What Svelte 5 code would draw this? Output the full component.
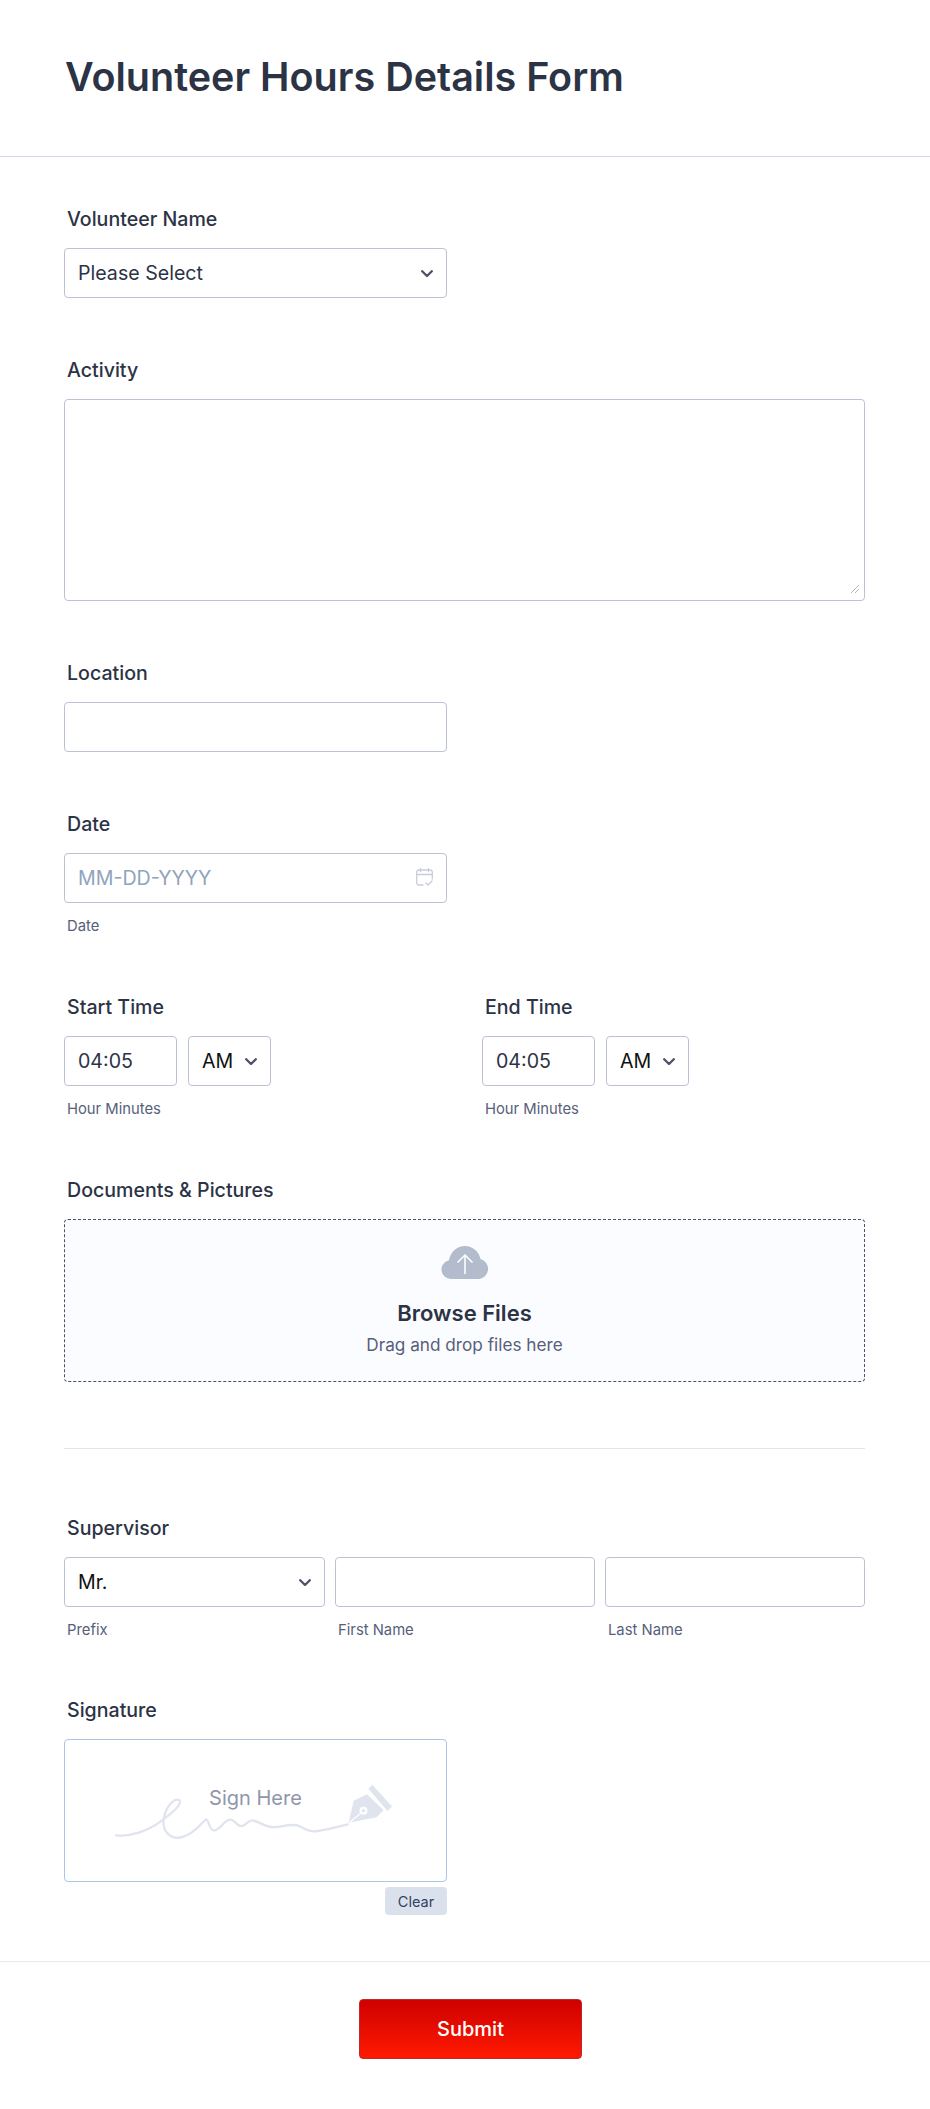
<script lang="ts">
  const suffixes = ['Prefix', 'First Name', 'Last Name'];

  const chevron = 'M1.2 1.2 6 6 10.800 1.2';
</script>

{#snippet caret()}
  <svg class="caret" width="12" height="7" viewBox="0 0 12 7" aria-hidden="true">
    <path d={chevron} fill="none" stroke="#4f5168" stroke-width="2.300" stroke-linecap="round" stroke-linejoin="round" />
  </svg>
{/snippet}

{#snippet timeField(label: string)}
  <div class="field">
    <label class="label" for={label}>{label}</label>
    <div class="time-row">
      <input id={label} class="input time" type="text" value="04:05" />
      <div class="select ampm">
        <span>AM</span>
        {@render caret()}
      </div>
    </div>
    <div class="sub">Hour Minutes</div>
  </div>
{/snippet}

<main class="form">
  <header class="head">
    <h1>Volunteer Hours Details Form</h1>
  </header>

  <section class="body">
    <div class="field">
      <div class="label">Volunteer Name</div>
      <div class="select half">
        <span class="value">Please Select</span>
        {@render caret()}
      </div>
    </div>

    <div class="field">
      <label class="label" for="activity">Activity</label>
      <div class="area-wrap">
        <textarea id="activity" class="input area"></textarea>
        <svg class="grip" width="10" height="10" viewBox="0 0 10 10" aria-hidden="true">
          <path d="M1 9 9 1M5 9 9 5" stroke="#b4b8c4" stroke-width="1" fill="none" />
        </svg>
      </div>
    </div>

    <div class="field">
      <label class="label" for="location">Location</label>
      <input id="location" class="input half" type="text" />
    </div>

    <div class="field">
      <label class="label" for="date">Date</label>
      <div class="date half">
        <input id="date" class="input" type="text" placeholder="MM-DD-YYYY" />
        <svg class="cal" width="17" height="18" viewBox="0 0 17 18" aria-hidden="true">
          <path d="M7 17H2.500A2 2 0 0 1 .7 15V4A2 2 0 0 1 2.500 2h12a2 2 0 0 1 1.800 2v7M.7 6.500h15.600M4.500.7v3M12.500.7v3M10 15l2 2 4-4" fill="none" stroke="#c8cdd9" stroke-width="1.300" stroke-linecap="round" stroke-linejoin="round" />
        </svg>
      </div>
      <div class="sub">Date</div>
    </div>

    <div class="times">
      {@render timeField('Start Time')}
      {@render timeField('End Time')}
    </div>

    <div class="field">
      <div class="label">Documents &amp; Pictures</div>
      <div class="upload">
        <svg width="48" height="33" viewBox="0 0 48 33" aria-hidden="true">
          <path d="M10 33a9.500 9.500 0 0 1-2-18.800C9.500 6 16 0 24 0c7.500 0 14 5.500 15.500 13A10.200 10.200 0 0 1 38 33Z" fill="#b3bccd" />
          <path d="M24 28V9M16.500 16.500 24 9l7.500 7.500" fill="none" stroke="#fff" stroke-width="1.500" />
        </svg>
        <div class="browse">Browse Files</div>
        <div class="drag">Drag and drop files here</div>
      </div>
    </div>

    <hr class="divider" />

    <div class="field name-field">
      <div class="label">Supervisor</div>
      <div class="name-row">
        <div class="name-col">
          <div class="select prefix">
            <span>Mr.</span>
            {@render caret()}
          </div>
          <div class="sub">{suffixes[0]}</div>
        </div>
        <div class="name-col">
          <input class="input" type="text" aria-label="First Name" />
          <div class="sub">{suffixes[1]}</div>
        </div>
        <div class="name-col">
          <input class="input" type="text" aria-label="Last Name" />
          <div class="sub">{suffixes[2]}</div>
        </div>
      </div>
    </div>

    <div class="field sig-field">
      <div class="label">Signature</div>
      <div class="sig half">
        <svg class="sig-art" viewBox="42 30 1149 429" aria-hidden="true">
          <path d="M192 320C240 325 290 305 325 280C360 255 395 225 385 213C370 205 345 230 337 270C332 310 360 335 395 325C430 315 455 280 465 272C475 270 475 305 490 305C510 305 520 272 540 272C555 272 560 295 575 292C590 288 595 272 610 275C630 280 650 297 675 295C700 293 720 285 745 290C765 298 775 310 800 308C830 304 865 295 897 287" fill="none" stroke="#e0e4ee" stroke-width="7" stroke-linecap="round" />
          <path d="M900 282 915 215 955 195 1006 243 985 265Z" fill="#e0e4ee" />
          <path d="M960 178 972 166 1032 232 1018 246Z" fill="#e0e4ee" />
          <circle cx="945" cy="245" r="12" fill="#fff" />
          <circle cx="945" cy="245" r="5" fill="#e0e4ee" />
          <path d="M903 280 938 252" stroke="#fff" stroke-width="4" />
        </svg>
        <span class="sign">Sign Here</span>
      </div>
      <div class="sig-actions half">
        <button class="clear" type="button">Clear</button>
      </div>
    </div>
  </section>

  <footer class="foot">
    <button class="submit" type="button">Submit</button>
  </footer>
</main>

<style>
  :global(body) {
    margin: 0;
    background: #fff;
  }

  .form {
    width: 930px;
    height: 2109px;
    font-family: Inter, 'Liberation Sans', sans-serif;
    color: #2c3345;
  }

  .head {
    height: 157px;
    padding: 53px 65px 0;
    box-sizing: border-box;
    border-bottom: 1px solid #d8dae9;
  }

  h1 {
    margin: 0;
    font-size: 39.5px;
    line-height: 48px;
    font-weight: 600;
  }

  .body {
    padding: 50px 65px 0 64px;
    height: 1805px;
    box-sizing: border-box;
    border-bottom: 1px solid #eaebf2;
  }

  .field {
    margin-bottom: 60px;
  }

  .label {
    display: block;
    height: 24px;
    line-height: 24px;
    margin: 0 0 17px 3px;
    font-size: 19.6px;
    font-weight: 500;
  }

  .input,
  .select {
    box-sizing: border-box;
    display: block;
    width: 100%;
    height: 50px;
    padding: 0 13px;
    background: #fff;
    border: 1px solid #bcc2d3;
    border-radius: 4px;
    font-family: inherit;
    font-size: 19.6px;
    color: #2c3345;
    outline: none;
  }

  .input::placeholder {
    color: #8fa3bd;
    opacity: 1;
  }

  .select {
    display: flex;
    align-items: center;
    justify-content: space-between;
  }

  .half {
    width: 383px;
  }

  .area-wrap {
    position: relative;
  }

  .area {
    height: 202px;
    padding-top: 10px;
    resize: none;
  }

  .grip {
    position: absolute;
    right: 5px;
    bottom: 7px;
  }

  .date {
    position: relative;
  }

  .cal {
    position: absolute;
    right: 14px;
    top: 15px;
  }

  .sub {
    height: 18px;
    line-height: 18px;
    margin: 14px 0 1px 3px;
    font-size: 14.800px;
    color: #57607a;
  }

  .times {
    display: grid;
    grid-template-columns: 418px 383px;
    margin-bottom: -1px;
  }

  .time-row {
    display: flex;
    gap: 11px;
  }

  .time {
    width: 113px;
  }

  .ampm {
    width: 83px;
    color: #111;
  }

  .upload {
    box-sizing: border-box;
    height: 163px;
    padding-top: 26px;
    display: flex;
    flex-direction: column;
    align-items: center;
    background: #fbfcff;
    border: 1px dashed #4d5068;
    border-radius: 4px;
  }

  .browse {
    margin-top: 19px;
    font-size: 22px;
    line-height: 30px;
    font-weight: 600;
  }

  .drag {
    margin-top: 4px;
    font-size: 17.200px;
    line-height: 26px;
    color: #57607a;
  }

  .divider {
    margin: 66px 0 67px;
    height: 1px;
    border: 0;
    background: #e3e5ec;
  }

  .name-field {
    margin-bottom: 58px;
  }

  .name-row {
    display: grid;
    grid-template-columns: 261px 260px 260px;
    gap: 10px;
  }

  .prefix {
    color: #111;
  }

  .sig-field {
    margin-bottom: 0;
  }

  .sig {
    position: relative;
    box-sizing: border-box;
    height: 143px;
    border: 1px solid #aec6e6;
    border-radius: 4px;
  }

  .sig-art {
    position: absolute;
    inset: 0;
    width: 100%;
    height: 100%;
  }

  .sign {
    position: absolute;
    left: 0;
    right: 0;
    top: 45px;
    text-align: center;
    font-size: 20px;
    line-height: 26px;
    color: #8f96aa;
  }

  .sig-actions {
    display: flex;
    justify-content: flex-end;
    margin-top: 5px;
  }

  .clear {
    width: 62px;
    height: 28px;
    padding: 0;
    border: 0;
    border-radius: 4px;
    background: #dbe1ec;
    font-family: inherit;
    font-size: 14.500px;
    color: #33415f;
  }

  .foot {
    display: flex;
    justify-content: center;
    padding: 37px 0 0 11px;
  }

  .submit {
    width: 223px;
    height: 60px;
    border: 1px solid #b92a2a;
    border-radius: 4px;
    background: linear-gradient(180deg, #cf0000, #ff1a00);
    font-family: inherit;
    font-size: 20px;
    font-weight: 500;
    color: #fff;
  }
</style>
